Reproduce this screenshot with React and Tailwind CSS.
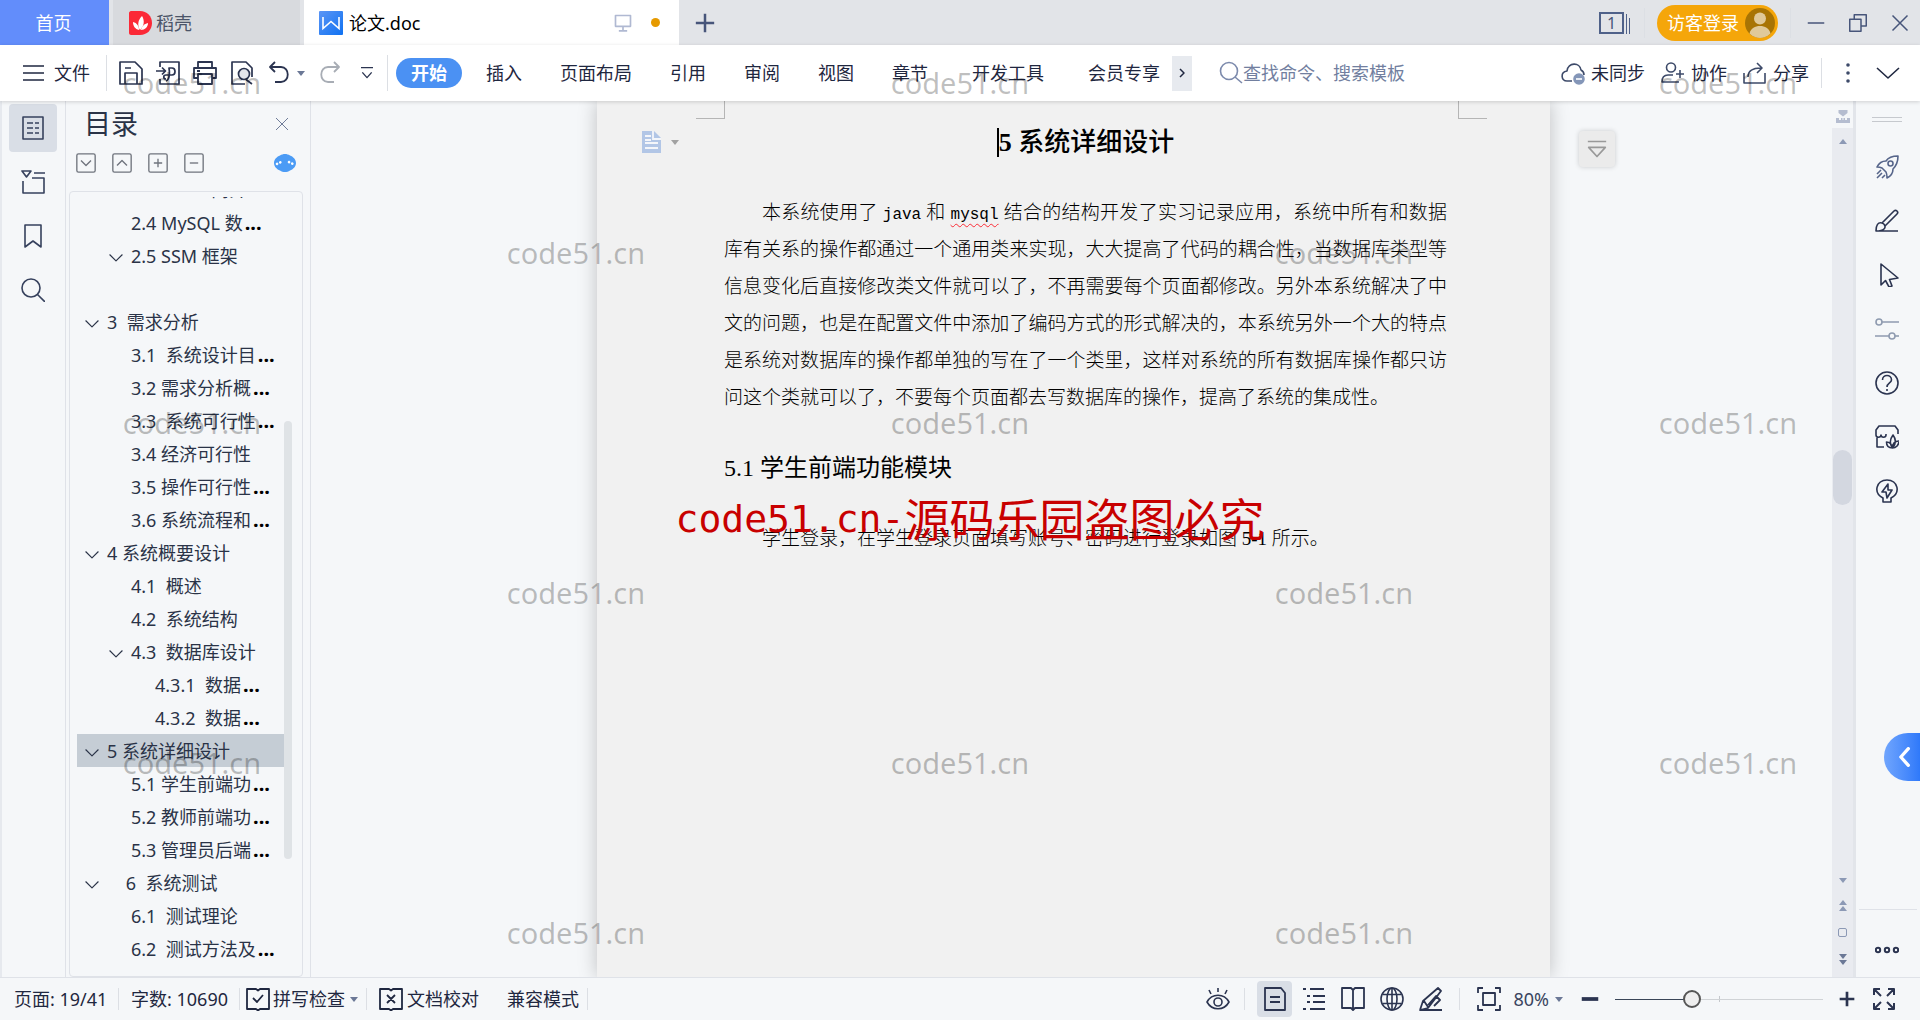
import React, { useState } from 'react';

const Icon = ({ size = 24, width = 1.6, children, className = '' }) => (
  <svg
    width={size}
    height={size}
    viewBox="0 0 24 24"
    fill="none"
    stroke="currentColor"
    strokeWidth={width}
    strokeLinejoin="round"
    className={`shrink-0 ${className}`}
    aria-hidden="true"
  >
    {children}
  </svg>
);

const Caret = ({ className = 'text-[#6b7896]' }) => (
  <svg width="8" height="5" viewBox="0 0 8 5" className={`shrink-0 ${className}`} fill="currentColor" aria-hidden="true">
    <path d="M0 0h8L4 5z" />
  </svg>
);

const Divider = ({ className = '' }) => <span className={`w-px shrink-0 bg-[#dcdfe4] ${className}`} />;

const outline = [
  { text: '简介', level: 'clip' },
  { text: '2.4 MySQL 数', level: 2, more: true },
  { text: '2.5 SSM 框架', level: 2, open: true },
  { text: '', level: 1 },
  { text: '3  需求分析', level: 1, open: true },
  { text: '3.1  系统设计目', level: 2, more: true },
  { text: '3.2 需求分析概', level: 2, more: true },
  { text: '3.3  系统可行性', level: 2, more: true },
  { text: '3.4 经济可行性', level: 2 },
  { text: '3.5 操作可行性', level: 2, more: true },
  { text: '3.6 系统流程和', level: 2, more: true },
  { text: '4 系统概要设计', level: 1, open: true },
  { text: '4.1  概述', level: 2 },
  { text: '4.2  系统结构', level: 2 },
  { text: '4.3  数据库设计', level: 2, open: true },
  { text: '4.3.1  数据', level: 3, more: true },
  { text: '4.3.2  数据', level: 3, more: true },
  { text: '5 系统详细设计', level: 1, open: true },
  { text: '5.1 学生前端功', level: 2, more: true },
  { text: '5.2 教师前端功', level: 2, more: true },
  { text: '5.3 管理员后端', level: 2, more: true },
  { text: '    6  系统测试', level: 1, open: true },
  { text: '6.1  测试理论', level: 2 },
  { text: '6.2  测试方法及', level: 2, more: true },
];

const indents = {
  1: 'pl-2',
  2: 'pl-8',
  3: 'pl-14',
  clip: 'pl-28',
};

function TitleBar() {
  return (
    <header className="flex h-[45px] shrink-0 bg-[#e2e4e8]">
      <button className="w-[109px] bg-[#628dfb] pr-0.5 text-white">首页</button>
      <button className="ml-1 flex w-[187px] items-center gap-1 bg-[#d8dade] pl-4 text-[#4b5468]">
        <svg width="23" height="24" viewBox="0 0 23 24" aria-hidden="true">
          <path d="M2 0h9c7 0 12 5 12 12s-5 12-12 12H2c-1 0-2-1-2-2V2C0 1 1 0 2 0z" fill="#fb2937" />
          <path d="M11 19C8 14 9 9 13 5c3 5 2 10-2 14z" fill="#fff" />
          <path d="M10 19c-4-1-6-4-6-8 4 1 6 4 6 8zM12 19c1-4 3-6 7-7 0 4-3 7-7 7z" fill="#fff" />
        </svg>
        稻壳
      </button>
      <div className="ml-1 flex w-[375px] items-center bg-white pl-[15px] pr-[19px]">
        <svg width="24" height="24" viewBox="0 0 24 24" aria-hidden="true">
          <defs>
            <linearGradient id="doc" x1="0" y1="0" x2="1" y2="1">
              <stop offset="0" stopColor="#5b95f5" />
              <stop offset="1" stopColor="#0f72f2" />
            </linearGradient>
          </defs>
          <rect width="24" height="24" rx="1" fill="url(#doc)" />
          <path d="M4 6v11.500l8-7 8 7V6" fill="none" stroke="#fff" strokeWidth="1.6" />
        </svg>
        <span className="ml-1.5 text-black">论文.doc</span>
        <Icon size={20} className="ml-auto text-[#b0b9d2]" width={2}>
          <path d="M3 3h18v13H3zM12 16v5M7 21.500h10" />
        </Icon>
        <span className="ml-[18px] size-[9px] rounded-full bg-[#e69a00]" />
      </div>
      <button className="ml-4 self-center text-[#47557a]" aria-label="新建">
        <Icon size={20} width={3}>
          <path d="M12 1v22M1 12h22" />
        </Icon>
      </button>
      <div className="ml-auto flex items-center text-[#47557a]">
        <button aria-label="窗口" className="flex gap-0.5">
          <span className="flex h-[22px] w-[25px] items-center justify-center border-2 border-[#4f6189] text-base">1</span>
          <span className="h-5 w-px self-end bg-[#4f6189]" />
          <span className="h-4 w-px self-end bg-[#4f6189]" />
        </button>
        <Divider className="ml-3.5 h-[30px] bg-[#ccd0d6]" />
        <button className="ml-3 flex h-9 items-center gap-1.5 rounded-full bg-[#f5a60a] pl-2.5 pr-[3px] text-white">
          访客登录
          <svg width="30" height="30" viewBox="0 0 30 30" aria-hidden="true">
            <circle cx="15" cy="15" r="15" fill="#a87404" />
            <circle cx="15" cy="10.500" r="6" fill="#e0c999" />
            <path d="M4.500 25.500C6 20 10 18 15 18s9 2 10.500 7.500C22 29 18 30 15 30s-7-1-10.500-4.500z" fill="#e0c999" />
          </svg>
        </button>
        <Divider className="ml-3 h-[30px] bg-[#ccd0d6]" />
        <button className="ml-4" aria-label="最小化">
          <Icon size={18} width={2}><path d="M1 12h22" /></Icon>
        </button>
        <button className="ml-6" aria-label="还原">
          <Icon size={18} width={2}><path d="M1 7h15v16H1zM7 7V1h16v15h-7" /></Icon>
        </button>
        <button className="ml-6 mr-[11px]" aria-label="关闭">
          <Icon size={18} width={2}><path d="M2 2l20 20M22 2L2 22" /></Icon>
        </button>
      </div>
    </header>
  );
}

function Toolbar() {
  return (
    <nav className="z-10 flex h-14 shrink-0 items-center whitespace-nowrap bg-white text-[#1f2740] shadow-[0_1px_4px_rgba(0,0,0,0.16)]">
      <button className="ml-[22px] flex items-center gap-2">
        <Icon width={1.6}><path d="M1 5h21M1 12h21M1 19h21" /></Icon>
        文件
      </button>
      <Divider className="ml-4 h-9" />
      <div className="ml-3 flex items-center gap-[13px] text-[#2b3450]">
        <button aria-label="保存">
          <Icon width={1.7} className="block"><path d="M1 1h15l7 7v15H1zM6 23V12h12v11M6 7h6" /></Icon>
        </button>
        <button aria-label="输出为PDF">
          <Icon width={1.7} className="block">
            <path d="M4 6V1h19v22H4v-5M0 10h9M6 6.500l3.500 3.500L6 13.500M10 20c5-2 3-13 3-13h3c4 0 4 7 0 7h-6c-3 0-3 4 0 4" />
          </Icon>
        </button>
        <button aria-label="打印">
          <Icon width={1.8} className="block"><path d="M5 7V1h14v6M5 17H1V7h22v10h-4M5 13h14v10H5zM4 10h3" /></Icon>
        </button>
        <button aria-label="打印预览">
          <Icon width={1.7} className="block">
            <path d="M15 23H2V1h14l6 6v9M16 18.500l6 4.500" />
            <circle cx="14" cy="13" r="5.500" fill="#e3e5ea" />
          </Icon>
        </button>
        <button aria-label="撤销" className="flex items-center gap-1.5">
          <Icon width={1.8}><path d="M8 1L3 6l5 5M3 6h11c9 0 9 15 0 15H8" /></Icon>
          <Caret />
        </button>
        <button aria-label="恢复" className="text-[#a8adb5]">
          <Icon width={1.8}><path d="M16 1l5 5-5 5M21 6H10C1 6 1 21 10 21h6" /></Icon>
        </button>
        <button aria-label="自定义" className="ml-1">
          <Icon size={16} width={2}><path d="M3 4h18M5 11l7 8 7-8" /></Icon>
        </button>
      </div>
      <Divider className="ml-3 h-9" />
      <button className="ml-2 h-[30px] rounded-full bg-[#4b91f3] px-[15px] font-bold text-white">开始</button>
      <div className="ml-6 flex gap-[38px]">
        <button>插入</button>
        <button>页面布局</button>
        <button>引用</button>
        <button>审阅</button>
        <button>视图</button>
        <button>章节</button>
      </div>
      <div className="ml-11 flex gap-11">
        <button>开发工具</button>
        <button>会员专享</button>
      </div>
      <button aria-label="更多选项卡" className="ml-3 flex h-[35px] w-5 items-center justify-center bg-[#e7eaef]">
        <Icon size={12} width={3}><path d="M8 4l8 8-8 8" /></Icon>
      </button>
      <label className="ml-[27px] flex items-center text-[#7c8aac]">
        <Icon><circle cx="10" cy="10" r="8.500" /><path d="M16 16l7 6" /></Icon>
        <input
          type="text"
          aria-label="搜索"
          placeholder="查找命令、搜索模板"
          className="w-52 outline-none placeholder:text-[#727f9f]"
        />
      </label>
      <div className="ml-auto flex items-center">
        <button className="flex items-center gap-1.5">
          <Icon className="text-[#3d4a69]">
            <path d="M11 20H6C0 20-1 11 6 10 7 1 19 1 20 9c2 1 3 3 3 5" />
            <circle cx="18" cy="18" r="5" fill="#8496b8" stroke="#8496b8" />
            <path d="M15 18h6" stroke="#fff" />
          </Icon>
          未同步
        </button>
        <button className="ml-4 flex items-center gap-1.5">
          <Icon className="text-[#3d4a69]">
            <circle cx="10" cy="6.500" r="4.500" />
            <path d="M16 21H1c0-4 2-7 6-7h5M19 9v8M15 13h8M16 21h2" />
          </Icon>
          协作
        </button>
        <button className="ml-4 flex items-center gap-1.5">
          <Icon className="text-[#3d4a69]"><path d="M1 12v10h21V12M5 16c0-6 4-9 13-9M14 2l5 5-5 5" /></Icon>
          分享
        </button>
        <Divider className="ml-3 h-[30px]" />
        <button aria-label="更多" className="ml-3.5">
          <Icon width={0}><g fill="#3d4a69"><circle cx="12" cy="4" r="1.800" /><circle cx="12" cy="12" r="1.800" /><circle cx="12" cy="20" r="1.800" /></g></Icon>
        </button>
        <button aria-label="折叠功能区" className="ml-4 mr-5">
          <Icon><path d="M1 7l11 10L23 7" /></Icon>
        </button>
      </div>
    </nav>
  );
}

function LeftRail() {
  return (
    <aside className="flex w-[66px] shrink-0 flex-col items-center gap-1.5 border-l-2 border-r border-l-[#e6e9ee] border-r-[#dfe2e8] pr-0.5 pt-[3px] text-[#36415d]">
      <button aria-label="目录" className="flex size-12 items-center justify-center rounded bg-[#d9dee6]">
        <Icon><path d="M2 1h20v22H2zM6 7h6M14 7h4M6 12h6M14 12h4M6 17h6M14 17h4" /></Icon>
      </button>
      <button aria-label="章节导航" className="flex size-12 items-center justify-center">
        <Icon><path d="M1 1h9L5.500 7zM13 3h11M11 8h12v15H2V11" /></Icon>
      </button>
      <button aria-label="书签" className="flex size-12 items-center justify-center">
        <Icon><path d="M4 1h16v22l-8-6-8 6z" /></Icon>
      </button>
      <button aria-label="查找" className="flex size-12 items-center justify-center">
        <Icon><circle cx="10" cy="10" r="9" /><path d="M16.500 16.500L24 24" /></Icon>
      </button>
    </aside>
  );
}

function OutlinePanel() {
  const [current, setCurrent] = useState('5 系统详细设计');
  return (
    <section className="flex w-[245px] shrink-0 flex-col border-r border-[#dfe2e8] pl-[3px] pr-[7px] text-[#2a3347]">
      <div className="flex items-center justify-between pl-[15px] pr-3 pt-1">
        <h2 className="text-[27px] leading-[38px]">目录</h2>
        <button aria-label="关闭目录" className="text-[#6b7896]">
          <Icon size={18} width={1.3}><path d="M4 4l16 16M20 4L4 20" /></Icon>
        </button>
      </div>
      <div className="flex items-center gap-4 px-[7px] pb-[18px] pt-2.5 text-[#6f747d]">
        <button aria-label="展开"><Icon size={20} className="block"><rect x="1" y="1" width="22" height="22" rx="2" /><path d="M6 9l6 6 6-6" /></Icon></button>
        <button aria-label="收起"><Icon size={20} className="block"><rect x="1" y="1" width="22" height="22" rx="2" /><path d="M6 15l6-6 6 6" /></Icon></button>
        <button aria-label="增加"><Icon size={20} className="block"><rect x="1" y="1" width="22" height="22" rx="2" /><path d="M12 7v10M7 12h10" /></Icon></button>
        <button aria-label="减少"><Icon size={20} className="block"><rect x="1" y="1" width="22" height="22" rx="2" /><path d="M7 12h10" /></Icon></button>
        <button aria-label="智能识别" className="ml-auto">
          <svg width="22" height="20" viewBox="0 0 22 20" aria-hidden="true">
            <path d="M6 2.500c3-2 7-2 10 0 3 1 6 4 6 7.500s-3 6.500-6 7.500c-3 2-7 2-10 0-3-1-6-4-6-7.500s3-6.500 6-7.500z" fill="#4b9bf5" />
            <path d="M3 11l4-2M15 9l4 2" stroke="#fff" strokeWidth="2.600" strokeLinecap="round" strokeDasharray="0.1 3.500" />
          </svg>
        </button>
      </div>
      <div className="flex min-h-0 flex-1 rounded border border-[#dfe2e8] pl-[7px] pr-2.5 pt-[5px]">
        <div className="min-w-0 flex-1 overflow-hidden">
          <ul className="-mt-6">
            {outline.map((item, i) => (
              <li key={i} className={item.text === current ? 'bg-[#c5cdd5]' : ''}>
                <button
                  onClick={() => setCurrent(item.text)}
                  className={`flex h-[33px] w-full items-center whitespace-pre ${indents[item.level]}`}
                >
                  <span className="flex w-[22px] shrink-0 pt-1">
                    {item.open && <Icon size={14} width={2}><path d="M1 6l11 11L23 6" /></Icon>}
                  </span>
                  {item.text}
                  {item.more && <span className="ml-0.5 text-xl font-bold text-black">...</span>}
                </button>
              </li>
            ))}
          </ul>
        </div>
        <div className="flex w-2 flex-col">
          <span className="flex-[224]" />
          <span className="flex-[438] rounded-full bg-[#dfe3e6]" />
          <span className="flex-[117]" />
        </div>
      </div>
    </section>
  );
}

function Document() {
  return (
    <main className="min-w-0 flex-1 overflow-hidden pl-1">
      <article className="relative mx-auto h-full w-full max-w-[953px] bg-[#f1f1f1] font-['Liberation_Serif','Noto_Sans_CJK_SC',serif] text-black shadow-[0_0_18px_rgba(0,0,0,0.22)]">
        <div className="flex justify-between pl-[99px] pr-[63px]">
          <span className="h-[18px] w-[29px] border-b border-r border-[#b5b5b5]" />
          <span className="h-[18px] w-[29px] border-b border-l border-[#b5b5b5]" />
        </div>
        <div className="flex pr-[103px]">
          <div className="w-[127px] shrink-0 pl-[45px] pt-3">
            <button aria-label="段落布局" className="flex items-center gap-2.5">
              <svg width="19" height="22" viewBox="0 0 19 22" aria-hidden="true">
                <path d="M0 0h12l7 7v15H0z" fill="#b2c6e6" />
                <path d="M11 0v8h8M3 5h6M3 9h6M3 12h13M3 17h13" fill="none" stroke="#f4f6fa" strokeWidth="1.800" />
              </svg>
              <Caret className="text-[#a2a2a2]" />
            </button>
          </div>
          <div className="min-w-0 flex-1 text-[19px] leading-[37px]">
            <h1 className="flex h-[46px] items-center justify-center whitespace-pre text-[26px] font-medium">
              <span className="h-[29px] w-0.5 bg-black" />
              <b>5</b> 系统详细设计
            </h1>
            <p className="mt-[29px] text-justify indent-[38px] font-light">
              本系统使用了 <span className="font-['Liberation_Mono',monospace] text-base font-normal">java</span> 和{' '}
              <span className="font-['Liberation_Mono',monospace] text-base font-normal underline decoration-red-500 decoration-wavy decoration-1 underline-offset-4">mysql</span>{' '}
              结合的结构开发了实习记录应用，系统中所有和数据库有关系的操作都通过一个通用类来实现，大大提高了代码的耦合性，当数据库类型等信息变化后直接修改类文件就可以了，不再需要每个页面都修改。另外本系统解决了中文的问题，也是在配置文件中添加了编码方式的形式解决的，本系统另外一个大的特点是系统对数据库的操作都单独的写在了一个类里，这样对系统的所有数据库操作都只访问这个类就可以了，不要每个页面都去写数据库的操作，提高了系统的集成性。
            </p>
            <h2 className="mt-[29px] text-2xl leading-[46px]">5.1 学生前端功能模块</h2>
            <p className="mt-[29px] indent-[38px] font-light">
              学生登录，在学生登录页面填写账号、密码进行登录如图 <span className="font-normal">5-1</span> 所示。
            </p>
          </div>
        </div>
        <button
          aria-label="展开工具"
          className="absolute left-full top-[30px] ml-[29px] flex size-9 items-center justify-center rounded bg-[#ebebeb] text-[#999] shadow-[0_0_5px_rgba(0,0,0,0.18)]"
        >
          <Icon size={20} width={2}><path d="M1 3h22M2 10h20l-10 11z" /></Icon>
        </button>
      </article>
    </main>
  );
}

function ScrollColumn() {
  return (
    <div className="flex w-6 shrink-0 flex-col border-r-[3px] border-[#e2e5ea] text-[#8c99b5]">
      <button aria-label="标尺" className="flex h-[27px] items-center justify-center pt-1 text-[#b5bdd0]">
        <svg width="14" height="13" viewBox="0 0 14 13" fill="currentColor" aria-hidden="true">
          <path d="M2.500 0h9v3L7 6.500 2.500 3zM0 8h3v2h2V8h1.500v2h1V8H9v2h2V8h3v5H0z" />
        </svg>
      </button>
      <div className="flex min-h-0 flex-1 flex-col items-center bg-[#e9ebf0] pb-3 pt-[11px]">
        <button aria-label="向上滚动"><Caret className="block rotate-180" /></button>
        <span className="flex-[305]" />
        <span className="w-[19px] flex-[55] rounded-full bg-[#d3d7e0]" />
        <span className="flex-[372]" />
        <button aria-label="向下滚动"><Caret className="block" /></button>
        <button aria-label="上一页" className="mt-[17px] flex flex-col gap-px">
          <Caret className="rotate-180" />
          <Caret className="rotate-180" />
        </button>
        <button aria-label="选择浏览对象" className="mt-[17px] size-[9px] rounded-xs border border-[#8c99b5]" />
        <button aria-label="下一页" className="mt-[17px] flex flex-col gap-px">
          <Caret />
          <Caret />
        </button>
      </div>
    </div>
  );
}

function RightRail() {
  return (
    <aside className="flex w-16 shrink-0 flex-col text-[#2b3450]">
      <div className="flex flex-col items-center pr-0.5">
        <span className="mt-4 h-[5px] w-[30px] border-y border-[#c6c9ce]" />
        <div className="mt-[33px] flex flex-col gap-[30px]">
          <button aria-label="推荐" className="text-[#56658a]">
            <Icon className="block">
              <path d="M23 1c-7 0-10 2-12 5-4 0-7 2-9 6 2 0 3 0 5 1l4 4c1 2 1 3 1 6 4-2 6-5 6-9 3-3 5-6 5-13zM2 19l4-4M2 23l5-5M7 23l3-3" />
              <circle cx="15.500" cy="8.500" r="2.500" />
            </Icon>
          </button>
          <button aria-label="样式">
            <Icon className="block"><path d="M1 22h22M1 22c0-6 2-9 6-8 3 1 4 4 2 6-2 2-4 2-8 2zM7.500 13.500L19 2c2-2 5 1 3 3L10 17" /></Icon>
          </button>
          <button aria-label="选择">
            <Icon className="block"><path d="M6 1v21l4.500-4.500L14 24l3-1-2.500-6.500L23 15z" /></Icon>
          </button>
          <button aria-label="属性" className="text-[#8f9bb0]">
            <Icon className="block"><circle cx="4" cy="5" r="3" /><path d="M7 5h17M0 19h14" /><circle cx="17" cy="19" r="3" /><path d="M20 19h4" /></Icon>
          </button>
          <button aria-label="帮助">
            <Icon className="block"><circle cx="12" cy="12" r="11" /><path d="M7.500 9c0-6 9-6 9 0 0 3-4.500 3-4.500 7M12 18v2" /></Icon>
          </button>
          <button aria-label="稻壳资源">
            <Icon className="block">
              <path d="M2 12v10h7M1 10V5l3-4h16l3 4v4M1 10c0 3 5 3 5 0 0 3 5 3 5 0v-1" />
              <path d="M17.500 23c-3-4-2.500-9 .5-13 3 4 3 9-.5 13zM17.500 23c-4 0-6-2-6-6 3 0 5 2 6 6zM17.500 23c0-4 2-7 6.500-7 0 4-3 7-6.500 7z" />
            </Icon>
          </button>
          <button aria-label="灵感">
            <Icon className="block"><path d="M8 23v-4C-2 14 1 1 12 1s14 13 4 18v4zM13 5l-6 8h4l1 6 5-8h-4z" /></Icon>
          </button>
        </div>
      </div>
      <button
        aria-label="展开侧栏"
        className="mb-auto mt-[230px] flex h-12 w-9 items-center justify-center self-end rounded-l-full bg-linear-to-r from-[#70a5fd] to-[#2f79fa] pl-1.5 text-white"
      >
        <Icon size={20} width={4}><path d="M16 2L7 12l9 10" strokeLinecap="round" /></Icon>
      </button>
      <div className="mx-[3px] flex justify-center border-t border-[#dfe2e8] pb-[15px] pr-0.5 pt-7">
        <button aria-label="更多工具">
          <Icon width={2} className="block"><circle cx="3" cy="12" r="2.200" /><circle cx="12" cy="12" r="2.200" /><circle cx="21" cy="12" r="2.200" /></Icon>
        </button>
      </div>
    </aside>
  );
}

function StatusBar() {
  const [zoom, setZoom] = useState(36);
  return (
    <footer className="flex h-[43px] shrink-0 items-center whitespace-nowrap border-t border-[#dfe2e8] bg-[#f5f7f9] text-[#1f2740]">
      <button className="ml-3.5 w-[104px] text-left">页面: 19/41</button>
      <Divider className="h-[22px]" />
      <button className="ml-3 w-[108px] text-left">字数: 10690</button>
      <Divider className="h-[22px]" />
      <button className="ml-1.5 flex items-center gap-[3px]">
        <Icon width={1.8}><path d="M10 2H1v20h9l2 1.500 2-1.500h9V2h-9l-2 1.500zM7 11l4 4 6-7" /></Icon>
        拼写检查
        <Caret className="ml-0.5 text-[#6b7896]" />
      </button>
      <Divider className="ml-2 h-[22px]" />
      <button className="ml-3 flex items-center gap-1">
        <Icon width={1.8}><path d="M10 2H1v20h9l2 1.500 2-1.500h9V2h-9l-2 1.500zM8 8l8 8M16 8l-8 8" /></Icon>
        文档校对
      </button>
      <button className="ml-7">兼容模式</button>
      <Divider className="ml-2 h-[22px]" />
      <div className="ml-auto flex items-center text-[#2b3450]">
        <button aria-label="护眼模式">
          <Icon><path d="M1 15c5-9 17-9 22 0-5 9-17 9-22 0zM12 1v4M3 3l2 4M21 3l-2 4" /><circle cx="12" cy="15" r="4" /></Icon>
        </button>
        <Divider className="ml-3.5 h-[22px]" />
        <button aria-label="页面视图" className="ml-3 flex h-9 w-[35px] items-center justify-center rounded-sm bg-[#d9dee6]">
          <Icon width={1.8}><path d="M2 1h16l4 5v17H2zM7 10h10M7 15h10" /></Icon>
        </button>
        <div className="ml-2.5 flex gap-[15px]">
          <button aria-label="大纲视图">
            <Icon width={1.8}><path d="M1 2h3M8 2h14M5 9h3M11 9h12M5 15h3M11 15h12M1 22h3M8 22h15" /></Icon>
          </button>
          <button aria-label="阅读版式">
            <Icon width={1.8}><path d="M12 3v19M10 1H1v20h9l2 2 2-2h9V1h-9l-2 2z" /></Icon>
          </button>
          <button aria-label="Web版式">
            <Icon width={1.6}><circle cx="12" cy="12" r="11" /><ellipse cx="12" cy="12" rx="5" ry="11" /><path d="M12 1v22M2.500 7.500h19M2.500 16.500h19" /></Icon>
          </button>
          <button aria-label="写作模式">
            <Icon width={1.8}><path d="M1 23l3-9L19 1l3 3L9 21l-8 2h22M5 14l4 6M9 18l8-9 4 4-6 6" /></Icon>
          </button>
        </div>
        <Divider className="ml-4 h-[22px]" />
        <button aria-label="最佳显示比例" className="ml-[17px]">
          <Icon width={1.8}><path d="M1 6V1h5M18 1h5v5M23 18v5h-5M6 23H1v-5M6 6h12v12H6z" /></Icon>
        </button>
        <button className="ml-3 flex items-center gap-1.5 text-[#3a4560]">
          80%
          <Caret />
        </button>
        <button aria-label="缩小" className="ml-[18px]">
          <Icon size={18} width={5}><path d="M1 12h22" /></Icon>
        </button>
        <div className="relative ml-4 flex items-center">
          <span className="absolute left-1/2 h-1.5 w-px bg-[#c5c8cc]" />
          <input
            type="range"
            aria-label="显示比例"
            value={zoom}
            onChange={(e) => setZoom(e.target.value)}
            className="relative h-5 w-[208px] appearance-none bg-[linear-gradient(to_right,#3a4658_37%,#d0d3d6_37%)] bg-[length:100%_1px] bg-center bg-no-repeat [&::-webkit-slider-thumb]:size-[18px] [&::-webkit-slider-thumb]:appearance-none [&::-webkit-slider-thumb]:rounded-full [&::-webkit-slider-thumb]:border-2 [&::-webkit-slider-thumb]:border-[#555] [&::-webkit-slider-thumb]:bg-[#eeeeee]"
          />
        </div>
        <button aria-label="放大" className="ml-4">
          <Icon size={16} width={4}><path d="M12 1v22M1 12h22" /></Icon>
        </button>
        <button aria-label="全屏" className="ml-[17px] mr-6">
          <Icon width={2}><path d="M2 8V2h6M2 2l7 7M16 2h6v6M22 2l-7 7M22 16v6h-6M22 22l-7-7M8 22H2v-6M2 22l7-7" /></Icon>
        </button>
      </div>
    </footer>
  );
}

function Watermarks() {
  return (
    <div className="pointer-events-none absolute inset-0 z-20">
      <div className="grid h-full grid-cols-5 grid-rows-6 place-items-center text-[29px] text-black/25">
        {Array.from({ length: 30 }, (_, i) => (
          <span key={i} className="pb-1">{i % 2 === 0 ? 'code51.cn' : ''}</span>
        ))}
      </div>
      <div className="absolute inset-0 flex items-center justify-center pl-5 pt-5">
        <span className="flex items-center whitespace-nowrap text-[45px] text-[#c80000]">
          <span className="font-['DejaVu_Sans_Mono',monospace] text-[38px]">code51.cn-</span>源码乐园盗图必究
        </span>
      </div>
    </div>
  );
}

export default function App() {
  return (
    <div className="relative flex h-screen flex-col overflow-hidden bg-[#f5f7f9] font-['Noto_Sans','Noto_Sans_CJK_SC',sans-serif] text-lg">
      <TitleBar />
      <Toolbar />
      <div className="flex min-h-0 flex-1">
        <LeftRail />
        <OutlinePanel />
        <Document />
        <ScrollColumn />
        <RightRail />
      </div>
      <StatusBar />
      <Watermarks />
    </div>
  );
}
